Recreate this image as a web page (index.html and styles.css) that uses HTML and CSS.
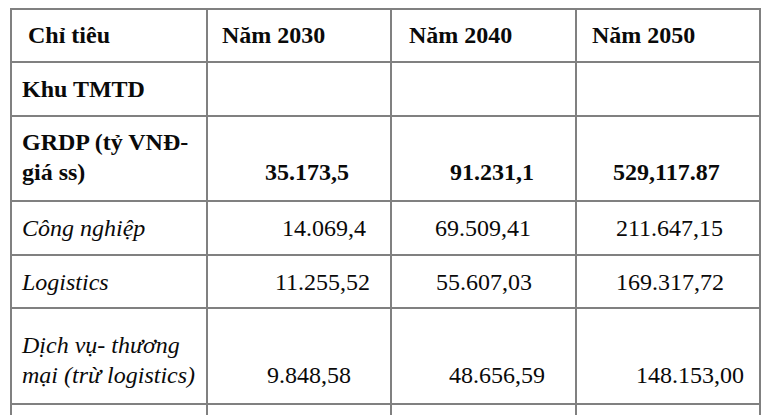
FILE: index.html
```html
<!DOCTYPE html>
<html lang="vi">
<head>
<meta charset="utf-8">
<title>Chỉ tiêu</title>
<link rel="stylesheet" href="styles.css">
</head>
<body>
<table class="grid">
  <colgroup>
    <col class="c-label">
    <col class="c-year">
    <col class="c-year2">
    <col class="c-year">
  </colgroup>
  <tr class="r-head">
    <td class="b ind-first">Chỉ tiêu</td>
    <td class="b i14">Năm 2030</td>
    <td class="b i17">Năm 2040</td>
    <td class="b i15">Năm 2050</td>
  </tr>
  <tr class="r-std">
    <td class="b">Khu TMTD</td>
    <td></td>
    <td></td>
    <td></td>
  </tr>
  <tr class="r-tall r-grdp">
    <td class="b">GRDP (tỷ VNĐ-<br>giá ss)</td>
    <td class="b i57">35.173,5</td>
    <td class="b i58">91.231,1</td>
    <td class="b i36">529,117.87</td>
  </tr>
  <tr class="r-std">
    <td class="it">Công nghiệp</td>
    <td class="i74">14.069,4</td>
    <td class="i43">69.509,41</td>
    <td class="i39">211.647,15</td>
  </tr>
  <tr class="r-std2">
    <td class="it">Logistics</td>
    <td class="i67">11.255,52</td>
    <td class="i44">55.607,03</td>
    <td class="i39">169.317,72</td>
  </tr>
  <tr class="r-tall r-dv">
    <td class="it">Dịch vụ- thương<br>mại (trừ logistics)</td>
    <td class="i59">9.848,58</td>
    <td class="i57">48.656,59</td>
    <td class="i59">148.153,00</td>
  </tr>
  <tr class="r-last">
    <td></td>
    <td></td>
    <td></td>
    <td></td>
  </tr>
</table>
</body>
</html>
```
FILE: styles.css
```css
html, body {
  margin: 0;
  padding: 0;
  background: #ffffff;
}

body {
  padding: 8px 0 0 10px;
  font-family: "Liberation Serif", "Times New Roman", serif;
  font-size: 24px;
  color: #000000;
  overflow: hidden;
}

.grid {
  border-collapse: collapse;
  table-layout: fixed;
  width: 751px;
}

.c-label { width: 196px; }
.c-year { width: 184px; }
.c-year2 { width: 185px; }

.grid td {
  box-sizing: border-box;
  border: 2px solid #808080;
  padding: 0 0 0 10px;
  line-height: 30px;
  vertical-align: middle;
  white-space: nowrap;
  font-family: "Liberation Serif", "Times New Roman", serif;
  color: #0a0a0a;
}

.r-head td { height: 53px; padding-bottom: 2px; }
.r-std td { height: 54px; }
.r-std2 td { height: 53px; }
.r-grdp td { height: 85px; }
.r-dv td { height: 96px; }
.r-tall td {
  vertical-align: bottom;
  padding-bottom: 13px;
}
.r-last td { height: 40px; }

.b { font-weight: bold; }
.it { font-style: italic; }

.ind-first { padding-left: 16px !important; }
.i14 { padding-left: 14px !important; }
.i15 { padding-left: 15px !important; }
.i17 { padding-left: 17px !important; }
.i36 { padding-left: 36px !important; }
.i39 { padding-left: 39px !important; }
.i43 { padding-left: 43px !important; }
.i44 { padding-left: 44px !important; }
.i57 { padding-left: 57px !important; }
.i58 { padding-left: 58px !important; }
.i59 { padding-left: 59px !important; }
.i67 { padding-left: 67px !important; }
.i74 { padding-left: 74px !important; }
```
